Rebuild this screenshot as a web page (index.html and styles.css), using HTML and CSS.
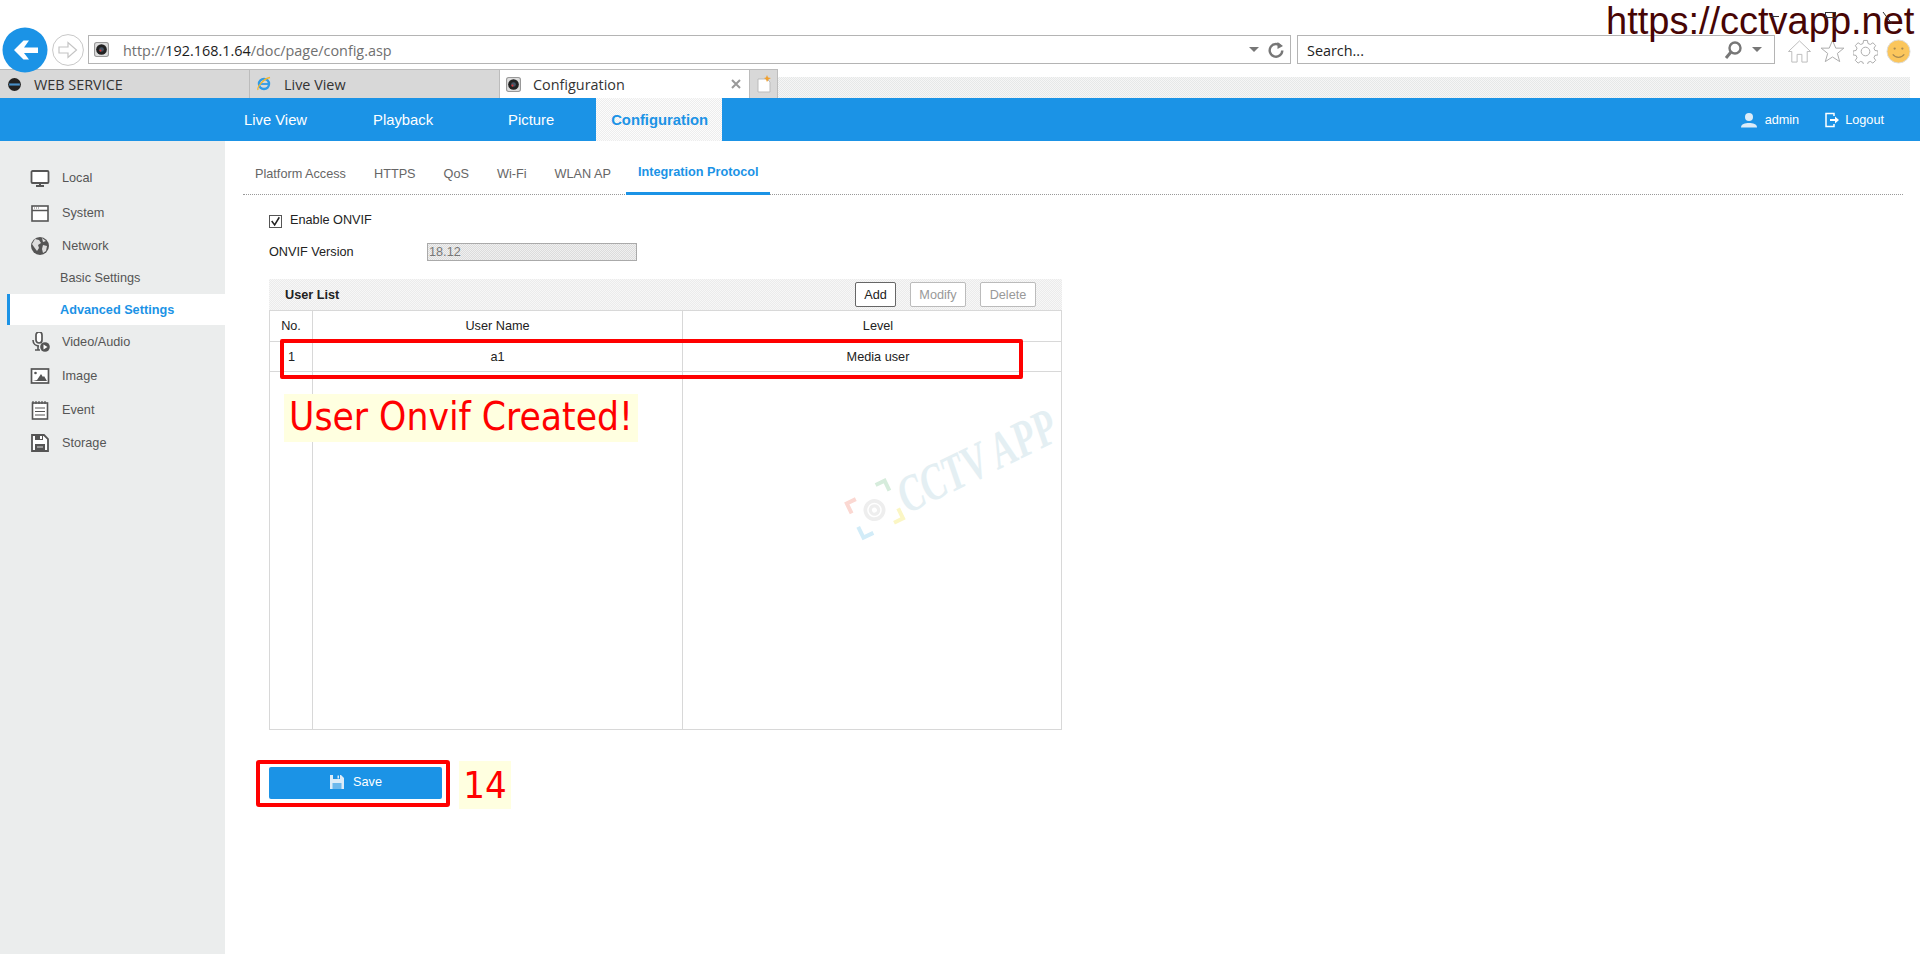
FILE: index.html
```html
<!DOCTYPE html>
<html lang="en">
<head>
<meta charset="utf-8">
<title>Configuration</title>
<link rel="stylesheet" href="styles.css">
</head>
<body>
<div class="page">
  <div class="toolbar">
    <svg class="back" viewBox="0 0 46 46"><circle cx="23" cy="23" r="22.5" fill="#1b93e6"/><path d="M36 20.500H22l5-7h-5.500L12 23l9.500 9.500H27l-5-6.500h14z" fill="#fff"/></svg>
    <svg class="forward" viewBox="0 0 32 32"><circle cx="16" cy="16" r="15.400" fill="#fff" stroke="#c8c8c8"/><path d="M7 13h9V8.500L24.500 16 16 23.500V19H7z" fill="#fff" stroke="#c4c4c4" stroke-width="1.200"/></svg>
    <div class="address">
      <svg class="favicon" viewBox="0 0 14 14"><rect x=".5" y=".5" width="13" height="13" rx="2" fill="#ddd" stroke="#999"/><circle cx="7" cy="7" r="5" fill="#222"/><circle cx="7" cy="7" r="2.200" fill="#456"/><circle cx="6" cy="8" r="1" fill="#d33"/></svg>
      <span class="url">http://<b class="host">192.168.1.64</b>/doc/page/config.asp</span>
      <span class="caret"></span>
      <svg class="refresh" viewBox="0 0 18 18"><path d="M14 5.500A6.300 6.300 0 1 0 15.300 9.500" fill="none" stroke="#777" stroke-width="2.400"/><path d="M10.500 1v7l5.500-3z" fill="#777"/></svg>
    </div>
    <div class="search">
      <span class="search-label">Search...</span>
      <svg class="magnifier" viewBox="0 0 20 20"><circle cx="12" cy="8" r="5.500" fill="none" stroke="#777" stroke-width="2.400"/><path d="M8 12l-5 6" stroke="#777" stroke-width="3"/></svg>
      <span class="caret"></span>
    </div>
    <div class="tools">
      <svg class="tool" viewBox="0 0 26 26"><path d="M1.500 13L13 2l11.500 11H21v11h-5.500v-8h-5v8H5V13z" fill="#fff" stroke="#bbb"/></svg>
      <svg class="tool" viewBox="0 0 26 26"><path d="M13 1.500l3.400 8h8.400l-6.700 5.500 2.400 8.500L13 18.700l-7.500 4.800L8 15 1.200 9.500h8.400z" fill="#fff" stroke="#aaa"/></svg>
      <svg class="tool" viewBox="0 0 26 26"><circle cx="13" cy="13" r="4.500" fill="none" stroke="#aaa"/><path d="M11 1.500h4l.6 3.200 2.400 1 2.700-1.800 2.900 2.900-1.800 2.700 1 2.400 3.200.6v4l-3.200.6-1 2.400 1.800 2.700-2.900 2.900-2.700-1.800-2.400 1-.6 3.200h-4l-.6-3.200-2.400-1-2.700 1.800-2.900-2.900 1.800-2.700-1-2.400-3.200-.6v-4l3.200-.6 1-2.400-1.800-2.700 2.900-2.900 2.700 1.800 2.400-1z" fill="none" stroke="#aaa"/></svg>
      <svg class="tool" viewBox="0 0 26 26"><circle cx="13" cy="13" r="12" fill="#fbc65c" stroke="#ddd"/><circle cx="9" cy="10" r="1.200" fill="#a98a50"/><circle cx="17" cy="10" r="1.200" fill="#a98a50"/><path d="M7 16c3 4 9 4 12 0" fill="none" stroke="#a98a50" stroke-width="1.300"/></svg>
    </div>
  </div>

  <div class="tabstrip">
    <div class="btab btab-first">
      <svg class="favicon" viewBox="0 0 14 14"><circle cx="7" cy="7" r="6" fill="#222"/><path d="M2 6h10v2H2z" fill="#4a90c8"/></svg>
      <span>WEB SERVICE</span>
    </div>
    <div class="btab">
      <svg class="favicon ie" viewBox="0 0 16 16"><circle cx="8" cy="8" r="5" fill="none" stroke="#2f9be6" stroke-width="2.400"/><path d="M3.500 8h9" stroke="#2f9be6" stroke-width="1.800"/><path d="M2 14C1 12 6 3 14 1.500" fill="none" stroke="#f2b632" stroke-width="1.300"/></svg>
      <span>Live View</span>
    </div>
    <div class="btab btab-current">
      <svg class="favicon" viewBox="0 0 14 14"><rect x=".5" y=".5" width="13" height="13" rx="2" fill="#ddd" stroke="#999"/><circle cx="7" cy="7" r="5" fill="#222"/><circle cx="7" cy="7" r="2.200" fill="#456"/><circle cx="6" cy="8" r="1" fill="#d33"/></svg>
      <span>Configuration</span>
      <svg class="close" viewBox="0 0 10 10"><path d="M1 1l8 8m0-8l-8 8" stroke="#999" stroke-width="2"/></svg>
    </div>
    <div class="newtab">
      <svg viewBox="0 0 14 18" width="14" height="18"><path d="M1 4h9l3 3v10H1z" fill="#fff" stroke="#bbb"/><path d="M10 0l1 2.500L14 3l-2.500 1.500L10 7 9 4.500 7 3l2-.5z" fill="#f0a030"/></svg>
    </div>
    <div class="strip-fill"></div>
  </div>

  <nav class="topnav">
    <a class="topnav-item nav-live">Live View</a>
    <a class="topnav-item nav-playback">Playback</a>
    <a class="topnav-item nav-picture">Picture</a>
    <a class="topnav-item topnav-active">Configuration</a>
    <div class="account">
      <svg class="acct-icon" viewBox="0 0 18 16"><circle cx="9" cy="5" r="4" fill="#dcecf8"/><path d="M1 15.500c0-3.500 4-4.500 8-4.500s8 1 8 4.500z" fill="#dcecf8"/></svg>
      <span>admin</span>
      <svg class="acct-icon logout-icon" viewBox="0 0 16 16"><path d="M10 4V1.500H2v13h8V12" fill="none" stroke="#fff" stroke-width="1.500"/><path d="M6 7h5V4.500L15 8l-4 3.500V9H6z" fill="#fff"/></svg>
      <span>Logout</span>
    </div>
  </nav>

  <div class="workspace">
    <aside class="sidebar">
      <div class="side-row">
        <svg class="side-icon" viewBox="0 0 20 20"><path d="M2.500 3h15a1 1 0 0 1 1 1v10a1 1 0 0 1-1 1h-15a1 1 0 0 1-1-1V4a1 1 0 0 1 1-1z" fill="#fff" stroke="#555" stroke-width="1.800"/><path d="M9 15h2v2h3v2H6v-2h3z" fill="#555"/></svg>
        <span>Local</span>
      </div>
      <div class="side-row">
        <svg class="side-icon" viewBox="0 0 20 20"><rect x="2" y="3" width="16" height="15" fill="#fff" stroke="#555" stroke-width="1.600"/><path d="M2 7.500h16" stroke="#555" stroke-width="1.500"/><path d="M4 5h6" stroke="#777" stroke-dasharray="1 1"/></svg>
        <span>System</span>
      </div>
      <div class="side-row">
        <svg class="side-icon" viewBox="0 0 20 20"><circle cx="10" cy="10" r="9" fill="#555"/><path d="M5 3l4 1 2 3-3 2 1 3-2 3-3-4-2-3zM13 9l4 1-1 5-3 2-1-4zM12 2l4 3-3 1z" fill="#ddd"/></svg>
        <span>Network</span>
      </div>
      <div class="side-row side-sub">Basic Settings</div>
      <div class="side-row side-sub side-active">Advanced Settings</div>
      <div class="side-row">
        <svg class="side-icon" viewBox="0 0 20 20"><rect x="6" y="0" width="6" height="11" rx="3" fill="#fff" stroke="#555" stroke-width="1.700"/><path d="M3 8c0 4 3 6 6 6M5 18h5M8 14v4" fill="none" stroke="#555" stroke-width="1.600"/><circle cx="15" cy="15" r="4.800" fill="#555"/><path d="M13.500 12.500l4 2.500-4 2.500z" fill="#fff"/></svg>
        <span>Video/Audio</span>
      </div>
      <div class="side-row">
        <svg class="side-icon" viewBox="0 0 20 20"><rect x="1.500" y="3" width="17" height="14" fill="#fff" stroke="#555" stroke-width="1.700"/><path d="M7 14l4-6 2 3 1-1 3 5H3z" fill="#555"/><circle cx="5.500" cy="7" r="1.300" fill="#555"/></svg>
        <span>Image</span>
      </div>
      <div class="side-row">
        <svg class="side-icon" viewBox="0 0 20 20"><rect x="2.500" y="3" width="15" height="16" fill="#fff" stroke="#555" stroke-width="1.600"/><path d="M3 1v3M6 1v3M9 1v3M12 1v3M15 1v3M5 8h10M5 11.500h10M5 15h10" stroke="#555" stroke-width="1.200"/></svg>
        <span>Event</span>
      </div>
      <div class="side-row">
        <svg class="side-icon" viewBox="0 0 20 20"><path d="M2 2h12l4 4v12H2z" fill="#fff" stroke="#555" stroke-width="1.800"/><path d="M5 2h8v5H5zM5 11h10v7H5z" fill="#555"/><path d="M7 14h6" stroke="#ddd"/><path d="M10 3h2v3h-2z" fill="#fff"/></svg>
        <span>Storage</span>
      </div>
    </aside>

    <main class="content">
      <div class="subtabs">
        <span class="subtab">Platform Access</span>
        <span class="subtab">HTTPS</span>
        <span class="subtab">QoS</span>
        <span class="subtab">Wi-Fi</span>
        <span class="subtab">WLAN AP</span>
        <span class="subtab subtab-active">Integration Protocol</span>
      </div>
      <div class="form">
        <label class="check-line"><span class="checkbox"><svg viewBox="0 0 13 13" width="11" height="11"><path d="M2 6l3.500 4.500L11 1.500" fill="none" stroke="#222" stroke-width="1.800"/></svg></span>Enable ONVIF</label>
        <div class="field-line">
          <span class="field-label">ONVIF Version</span>
          <span class="field-input">18.12</span>
        </div>
        <div class="list-head">
          <span class="list-title">User List</span>
          <span class="list-btn list-btn-on">Add</span>
          <span class="list-btn list-btn-modify">Modify</span>
          <span class="list-btn list-btn-delete">Delete</span>
        </div>
        <table class="users">
          <colgroup><col class="col-no"><col class="col-name"><col class="col-level"></colgroup>
          <tr class="row-head"><th>No.</th><th>User Name</th><th class="cell-level">Level</th></tr>
          <tr class="row-body"><td class="cell-no">1</td><td>a1</td><td class="cell-level">Media user</td></tr>
          <tr class="row-fill"><td></td><td></td><td></td></tr>
        </table>
        <button class="save" type="button">
          <svg viewBox="0 0 16 16" width="16" height="16"><path d="M1 1h11l3 3v11H1z" fill="#dcecf8"/><path d="M4 1h7v4H4z" fill="#1b93e6"/><path d="M8.500 1.500h1.500v3H8.500z" fill="#dcecf8"/><path d="M3.500 9h9v6h-9z" fill="#6cb8ec"/></svg>
          <span>Save</span>
        </button>
      </div>
    </main>
  </div>

  <div class="brand">https://cctvapp.net</div>
  <svg class="winctl" viewBox="0 0 140 30"><path d="M10 16.500h9" stroke="#333"/><rect x="65.500" y="12.500" width="10" height="5" fill="none" stroke="#333"/><path d="M123 12l9 12" stroke="#333"/></svg>

  <div class="mark-row"></div>
  <div class="mark-save"></div>
  <div class="note note-created">User Onvif Created!</div>
  <div class="note note-step">14</div>

  <div class="watermark">
    <svg class="wm-logo" viewBox="0 0 50 50"><path d="M3 18V7h10" fill="none" stroke="#fbd8d2" stroke-width="4"/><path d="M37 3h10v11" fill="none" stroke="#d6ecdc" stroke-width="4"/><path d="M47 34v11H37" fill="none" stroke="#fbf6c4" stroke-width="4"/><path d="M3 33v12h11" fill="none" stroke="#d2ecf8" stroke-width="4"/><circle cx="25" cy="25" r="11" fill="#eeeeee"/><circle cx="25" cy="25" r="6.500" fill="none" stroke="#fff" stroke-width="1.500"/><circle cx="25" cy="25" r="2.500" fill="#fff"/></svg>
    <span class="wm-text">CCTV APP</span>
  </div>
</div>
</body>
</html>
```
FILE: styles.css
```css
* { box-sizing: border-box; }
html, body { margin: 0; padding: 0; background: #fff; }
.page {
  position: relative;
  width: 1920px;
  height: 954px;
  overflow: hidden;
  font-family: "Liberation Sans", Arial, sans-serif;
  font-size: 12.7px;
  color: #222;
  display: flex;
  flex-direction: column;
}

/* browser toolbar */
.toolbar { display: flex; height: 69px; padding: 35px 0 0 2px; flex: none; }
.back { position: relative; z-index: 2; width: 46px; height: 46px; margin-top: -8px; flex: none; }
.forward { width: 32px; height: 32px; margin: -1px 0 0 4px; flex: none; }
.address, .search {
  height: 29px;
  border: 1px solid #b4b4b4;
  background: #fff;
  display: flex;
  align-items: center;
  font-family: "Open Sans", sans-serif;
  font-size: 14.4px;
  flex: none;
}
.address { width: 1203px; margin-left: 4px; padding: 0 5px 0 5px; }
.favicon { width: 15px; height: 15px; flex: none; }
.url { margin: 2px 0 0 14px; color: #707070; flex: 1; }
.host { font-weight: 400; color: #1c1c1c; }
.caret { width: 0; height: 0; border: 5px solid transparent; border-top: 5px solid #777; border-bottom: 0; flex: none; }
.refresh { width: 18px; height: 18px; margin-left: 8px; flex: none; }
.search { width: 478px; margin-left: 6px; padding: 0 12px 0 9px; color: #222; }
.search-label { flex: 1; margin-top: 2px; }
.magnifier { width: 20px; height: 20px; margin-right: 9px; flex: none; }
.tools { display: flex; gap: 8px; margin-left: 12px; padding-top: 4px; }
.tool { width: 25px; height: 25px; flex: none; }

/* browser tabs */
.tabstrip { display: flex; height: 29px; flex: none; }
.btab {
  width: 250px;
  display: flex;
  align-items: center;
  gap: 12px;
  padding: 0 6px;
  background: #d8d8d8;
  border: 1px solid #bcbcbc;
  border-width: 1px 1px 0 0;
  font-family: "Open Sans", sans-serif;
  font-size: 14.4px;
  color: #333;
}
.btab span { flex: 1; }
.btab-first { padding-left: 7px; }
.btab-current { background: #fff; }
.ie { width: 16px; height: 16px; }
.close { width: 10px; height: 10px; flex: none; margin-right: 2px; }
.newtab { width: 28px; background: #d8d8d8; border: 1px solid #bcbcbc; border-width: 1px 1px 0 0; display: flex; align-items: center; justify-content: center; }
.strip-fill {
  width: 1132px;
  margin-top: 8px;
  background: repeating-conic-gradient(#e6e8e8 0 25%, #f6f6f6 0 50%) 0 0 / 2px 2px;
}

/* top nav */
.topnav { height: 43px; background: #1b93e6; display: flex; align-items: stretch; flex: none; color: #fff; font-size: 14.8px; }
.topnav-item { display: flex; align-items: center; }
.nav-live { margin-left: 244px; }
.nav-playback { margin-left: 66px; }
.nav-picture { margin-left: 75px; }
.topnav-active {
  margin-left: 42px;
  padding: 0 15px;
  width: 126px;
  font-weight: 700;
  color: #1b93e6;
  background: repeating-conic-gradient(#ededed 0 25%, #fcfcfc 0 50%) 0 0 / 2px 2px;
}
.account { margin-left: auto; padding-right: 36px; display: flex; align-items: center; font-size: 12.7px; }
.acct-icon { width: 18px; height: 16px; margin-right: 7px; }
.logout-icon { margin-left: 25px; margin-right: 5px; width: 16px; }

/* body */
.workspace { flex: 1; display: flex; min-height: 0; }
.sidebar {
  width: 225px;
  flex: none;
  background: #ebeded;
  padding: 20px 0 0 7px;
  display: grid;
  grid-template-rows: 34px 35px 31px 33px 31px 33px 35px 33px 33px;
  align-content: start;
  color: #555;
}
.side-row { display: flex; align-items: center; gap: 12px; padding-left: 20px; border-left: 3px solid transparent; }
.side-icon { width: 20px; height: 20px; flex: none; }
.side-sub { padding-left: 50px; }
.side-active { background: #fff; border-left-color: #1b93e6; color: #1b93e6; font-weight: 700; }

.content { flex: 1; padding: 0 17px 0 18px; min-width: 0; }
.subtabs {
  display: flex;
  height: 54px;
  border-bottom: 1px dotted #999;
  color: #666;
}
.subtab { padding: 26px 14px 0; }
.subtab:first-child { margin-left: -2px; }
.subtab-active { color: #1b93e6; font-weight: 700; height: 54px; padding: 24px 12px 0; border-bottom: 3px solid #1b93e6; margin-left: 1px; }

.form { padding-left: 26px; display: flex; flex-direction: column; align-items: flex-start; }
.check-line { display: flex; align-items: center; gap: 8px; height: 18px; margin-top: 16px; }
.checkbox { width: 13px; height: 13px; border: 1px solid #555; background: #fff; display: flex; align-items: center; justify-content: center; margin-top: 3px; }
.field-line { display: flex; align-items: center; height: 18px; margin-top: 14px; }
.field-label { width: 158px; }
.field-input {
  width: 210px;
  height: 18px;
  border: 1px solid #aaa;
  padding-left: 1px;
  line-height: 16px;
  color: #777;
  background: repeating-conic-gradient(#dcdcdc 0 25%, #f0f0f0 0 50%) 0 0 / 2px 2px;
}
.list-head {
  width: 793px;
  height: 31px;
  margin-top: 18px;
  display: flex;
  align-items: center;
  padding-left: 16px;
  background: repeating-conic-gradient(#ebebeb 0 25%, #f7f7f7 0 50%) 0 0 / 2px 2px;
}
.list-title { font-weight: 700; margin-right: auto; }
.list-btn {
  height: 25px;
  border: 1px solid #bbb;
  border-radius: 2px;
  background: #fff;
  color: #999;
  display: flex;
  align-items: center;
  justify-content: center;
}
.list-btn-on { width: 41px; border-color: #666; color: #222; margin-right: 14px; }
.list-btn-modify { width: 56px; margin-right: 14px; }
.list-btn-delete { width: 56px; margin-right: 26px; }
.users { width: 792px; height: 420px; table-layout: fixed; border-collapse: collapse; }
.users th, .users td { border: 1px solid #d8d8d8; text-align: center; font-weight: 400; padding: 0; }
.col-no { width: 43px; }
.col-name { width: 370px; }
.col-level { width: 379px; }
.row-head { height: 31px; }
.row-body { height: 30px; }
.users .cell-no { text-align: left; padding-left: 18px; }
.users .cell-level { padding-left: 12px; }
.save {
  width: 173px;
  height: 32px;
  margin-top: 37px;
  padding: 0 0 3px;
  border: 0;
  border-radius: 2px;
  background: #1b93e6;
  color: #fff;
  font: inherit;
  display: flex;
  align-items: center;
  justify-content: center;
  gap: 8px;
}

/* overlays: annotations painted on the screenshot */
.brand { position: absolute; left: 1606px; top: -1px; font-size: 38px; line-height: 44px; color: #470505; white-space: nowrap; }
.winctl { position: absolute; left: 1760px; top: 0; width: 140px; height: 30px; }
.mark-row { position: absolute; left: 280px; top: 339px; width: 743px; height: 40px; border: 4px solid #f00; border-radius: 2px; }
.mark-save { position: absolute; left: 256px; top: 760px; width: 194px; height: 47px; border: 4px solid #f00; border-radius: 3px; }
.note { position: absolute; background: #ffffe0; color: #f00; font-family: "DejaVu Sans Condensed", "DejaVu Sans", sans-serif; text-align: center; white-space: nowrap; }
.note-created { left: 284px; top: 394px; width: 354px; height: 48px; font-size: 38.6px; line-height: 46px; }
.note-step { left: 459px; top: 761px; width: 52px; height: 48px; font-size: 38px; line-height: 48px; }
.watermark { position: absolute; left: 852px; top: 489px; height: 64px; display: flex; align-items: center; gap: 3px; transform: rotate(-26deg); transform-origin: 0 50%; pointer-events: none; }
.wm-logo { width: 50px; height: 50px; flex: none; }
.wm-text { font-family: "Liberation Serif", serif; font-style: italic; font-weight: 700; font-size: 52px; color: #e4eff3; white-space: nowrap; transform: scaleX(.7); transform-origin: 0 50%; }
```
